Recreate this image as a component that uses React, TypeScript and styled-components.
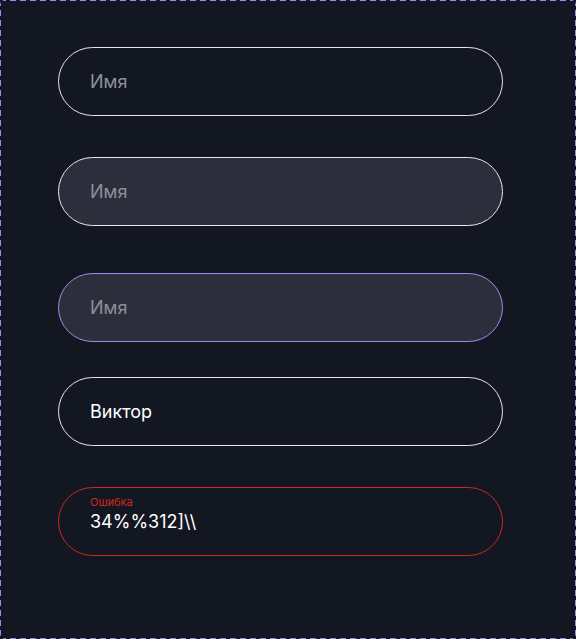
import { ReactElement } from 'react';
import styled, { createGlobalStyle, css } from 'styled-components';

type Variant = 'default' | 'filled' | 'focus' | 'error';

const GlobalStyle = createGlobalStyle`
  html, body {
    margin: 0;
    padding: 0;
    background: #131722;
  }
  body {
    font-family: Inter, "Noto Sans", sans-serif;
  }
`;

const dash = '#9a88f7';

// dashed outline drawn with gradients so the dash length matches the mockup
const Frame = styled.div`
  box-sizing: border-box;
  width: 576px;
  height: 639px;
  border-radius: 5px;
  background-color: #131722;
  background-image:
    repeating-linear-gradient(90deg, ${dash} 0 6px, transparent 6px 10px),
    repeating-linear-gradient(90deg, ${dash} 0 6px, transparent 6px 10px),
    repeating-linear-gradient(180deg, ${dash} 0 6px, transparent 6px 10px),
    repeating-linear-gradient(180deg, ${dash} 0 6px, transparent 6px 10px);
  background-size: 100% 1px, 100% 1px, 1px 100%, 1px 100%;
  background-position: 0 0, 0 100%, 0 0, 100% 0;
  background-repeat: no-repeat;
  padding: 47px 0 0 58px;
  display: flex;
  flex-direction: column;
`;

const Field = styled.div<{ $variant: Variant; $top: number }>`
  box-sizing: border-box;
  width: 445px;
  height: 69px;
  margin-top: ${p => p.$top}px;
  border-radius: 35px;
  border: 1px solid #e8e8ec;
  background: transparent;
  padding: 0 31px;
  display: flex;
  flex-direction: column;
  justify-content: center;

  ${p => p.$variant === 'filled' && css`
    background: #2c2f3b;
  `}
  ${p => p.$variant === 'focus' && css`
    background: #2c2f3b;
    border-color: #9a8ff0;
  `}
  ${p => p.$variant === 'error' && css`
    border-color: #d0281f;
  `}
`;

const Placeholder = styled.span`
  font-size: 18px;
  color: #8d909c;
  line-height: 22px;
`;

const Value = styled.span`
  font-size: 18px;
  color: #ffffff;
  line-height: 22px;
`;

const ErrorLabel = styled.span`
  font-size: 11px;
  line-height: 13px;
  color: #d0281f;
  margin-top: -14px;
  margin-bottom: 2px;
`;

const App = (): ReactElement => (
  <>
    <GlobalStyle />
    <Frame>
      <Field $variant="default" $top={0}>
        <Placeholder>Имя</Placeholder>
      </Field>
      <Field $variant="filled" $top={41}>
        <Placeholder>Имя</Placeholder>
      </Field>
      <Field $variant="focus" $top={47}>
        <Placeholder>Имя</Placeholder>
      </Field>
      <Field $variant="default" $top={35}>
        <Value>Виктор</Value>
      </Field>
      <Field $variant="error" $top={41}>
        <ErrorLabel>Ошибка</ErrorLabel>
        <Value>34%%312]\\</Value>
      </Field>
    </Frame>
  </>
);

export default App;
